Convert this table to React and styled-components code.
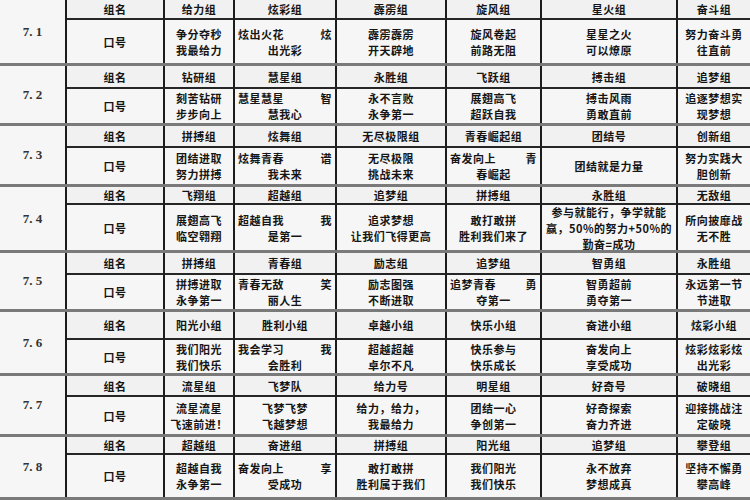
import styled, { createGlobalStyle } from "styled-components";

// 7月各小组 组名 / 口号 表
const COLS = "67px 98px 70px 102px 110px 95px 136px 72px";

const sections = [
  {
    id: "7.1",
    rows: [20, 43],
    names: ["给力组", "炫彩组", "霹雳组", "旋风组", "星火组", "奋斗组"],
    slogans: [
      ["争分夺秒", "我最给力"],
      [["炫出火花", "炫"], "出光彩"],
      ["霹雳霹雳", "开天辟地"],
      ["旋风卷起", "前路无阻"],
      ["星星之火", "可以燎原"],
      ["努力奋斗勇", "往直前"],
    ],
  },
  {
    id: "7.2",
    rows: [23, 34],
    names: ["钻研组", "慧星组", "永胜组", "飞跃组", "搏击组", "追梦组"],
    slogans: [
      ["刻苦钻研", "步步向上"],
      [["慧星慧星", "智"], "慧我心"],
      ["永不言败", "永争第一"],
      ["展翅高飞", "超跃自我"],
      ["搏击风雨", "勇敢直前"],
      ["追逐梦想实", "现梦想"],
    ],
  },
  {
    id: "7.3",
    rows: [22, 36],
    names: ["拼搏组", "炫舞组", "无尽极限组", "青春崛起组", "团结号", "创新组"],
    slogans: [
      ["团结进取", "努力拼搏"],
      [["炫舞青春", "谱"], "我未来"],
      ["无尽极限", "挑战未来"],
      [["奋发向上", "青"], "春崛起"],
      ["团结就是力量"],
      ["努力实践大", "胆创新"],
    ],
  },
  {
    id: "7.4",
    rows: [18, 45],
    names: ["飞翔组", "超越组", "追梦组", "拼搏组", "永胜组", "无敌组"],
    slogans: [
      ["展翅高飞", "临空翱翔"],
      [["超越自我", "我"], "是第一"],
      ["追求梦想", "让我们飞得更高"],
      ["敢打敢拼", "胜利我们来了"],
      ["参与就能行，争学就能", "赢，50%的努力+50%的", "勤奋=成功"],
      ["所向披靡战", "无不胜"],
    ],
  },
  {
    id: "7.5",
    rows: [22, 34],
    names: ["拼搏组", "青春组", "励志组", "追梦组", "智勇组", "永胜组"],
    slogans: [
      ["拼搏进取", "永争第一"],
      [["青春无敌", "笑"], "丽人生"],
      ["励志图强", "不断进取"],
      [["追梦青春", "勇"], "夺第一"],
      ["智勇超前", "勇夺第一"],
      ["永远第一节", "节进取"],
    ],
  },
  {
    id: "7.6",
    rows: [28, 33],
    names: ["阳光小组", "胜利小组", "卓越小组", "快乐小组", "奋进小组", "炫彩小组"],
    slogans: [
      ["我们阳光", "我们快乐"],
      [["我会学习", "我"], "会胜利"],
      ["超越超越", "卓尔不凡"],
      ["快乐参与", "快乐成长"],
      ["奋发向上", "享受成功"],
      ["炫彩炫彩炫", "出光彩"],
    ],
  },
  {
    id: "7.7",
    rows: [21, 37],
    names: ["流星组", "飞梦队", "给力号", "明星组", "好奇号", "破晓组"],
    slogans: [
      ["流星流星", "飞速前进！"],
      ["飞梦飞梦", "飞越梦想"],
      ["给力，给力，", "我最给力"],
      ["团结一心", "争创第一"],
      ["好奇探索", "奋力齐进"],
      ["迎接挑战注", "定破晓"],
    ],
  },
  {
    id: "7.8",
    rows: [18, 42],
    names: ["超越组", "奋进组", "拼搏组", "阳光组", "追梦组", "攀登组"],
    slogans: [
      ["超越自我", "永争第一"],
      [["奋发向上", "享"], "受成功"],
      ["敢打敢拼", "胜利属于我们"],
      ["我们阳光", "我们快乐"],
      ["永不放弃", "梦想成真"],
      ["坚持不懈勇", "攀高峰"],
    ],
  },
];

const Slogan = ({ lines }) => (
  <>
    {lines.map((line, i) =>
      Array.isArray(line) ? (
        <SplitLine key={i}>
          <span>{line[0]}</span>
          <span>{line[1]}</span>
        </SplitLine>
      ) : (
        <Line key={i}>{line}</Line>
      )
    )}
  </>
);

const App = () => {
  return (
    <>
      <GlobalStyle />
      <Sheet>
        {sections.map((s) => (
          <Section key={s.id} $top={s.rows[0]} $bottom={s.rows[1]}>
            <DayCell>{s.id.replace(".", ". ")}</DayCell>
            <Cell $head>组名</Cell>
            {s.names.map((n, i) => (
              <Cell key={n + i} $head $last={i === 5}>
                {n}
              </Cell>
            ))}
            <Cell>口号</Cell>
            {s.slogans.map((lines, i) => (
              <Cell key={i} $last={i === 5}>
                <Slogan lines={lines} />
              </Cell>
            ))}
          </Section>
        ))}
      </Sheet>
    </>
  );
};

export default App;

const GlobalStyle = createGlobalStyle`
  html, body {
    margin: 0;
    padding: 0;
    background: #f2f2f2;
    overflow: hidden;
  }
`;

const Sheet = styled.div`
  width: 750px;
  height: 500px;
  overflow: hidden;
  background: #f3f3f3;
  color: #151515;
  font-family: "Noto Sans CJK SC", "Noto Sans", sans-serif;
  font-weight: 700;
  font-size: 11px;
`;

const Section = styled.div`
  display: grid;
  grid-template-columns: ${COLS};
  grid-template-rows: ${(p) => p.$top}px ${(p) => p.$bottom}px;
  border-bottom: 3px solid #7a7a7a;
`;

const DayCell = styled.div`
  grid-row: span 2;
  display: flex;
  align-items: center;
  justify-content: center;
  border-right: 2px solid #1c1c1c;
  background: #f6f6f6;
  font-family: "Liberation Serif", "DejaVu Serif", serif;
  font-size: 13px;
  font-weight: 700;
  color: #333;
`;

const Cell = styled.div`
  display: flex;
  flex-direction: column;
  align-items: stretch;
  justify-content: center;
  min-width: 0;
  padding: 0 3px;
  border-right: ${(p) => (p.$last ? "none" : "2px solid #1c1c1c")};
  border-bottom: ${(p) => (p.$head ? "2px solid #262626" : "none")};
  background: ${(p) => (p.$head ? "#f1f1f1" : "#f6f6f6")};
  text-align: center;
  line-height: 16px;
  letter-spacing: 0.5px;
  white-space: nowrap;
  overflow: visible;
`;

const Line = styled.div`
  text-align: center;
`;

const SplitLine = styled.div`
  display: flex;
  justify-content: space-between;
`;
